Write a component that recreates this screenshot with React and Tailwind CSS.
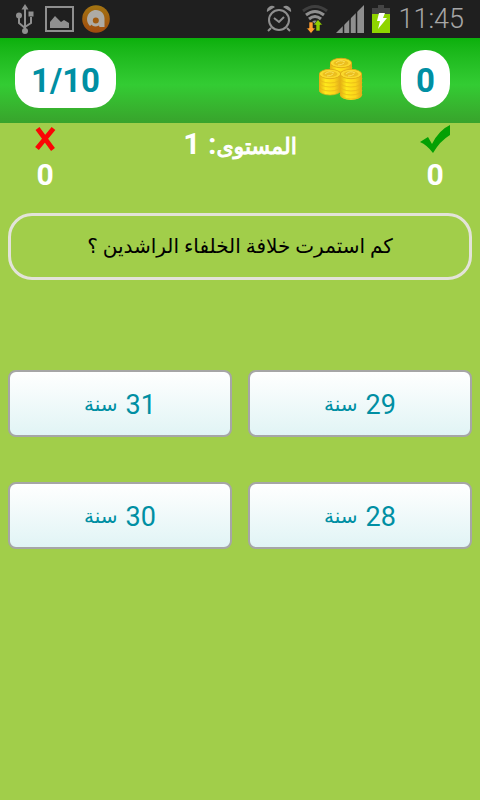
import React, { useState } from 'react';

const answers = [
  { id: 1, number: 29, unit: 'سنة' },
  { id: 2, number: 31, unit: 'سنة' },
  { id: 3, number: 28, unit: 'سنة' },
  { id: 4, number: 30, unit: 'سنة' },
];

const UsbIcon = () => (
  <svg width="20" height="32" viewBox="0 0 20 32" fill="none" stroke="#8f8f8f" strokeWidth="2">
    <path d="M10 5v23" />
    <path d="M10 25l-6-5v-6M10 24l6-4v-6" />
    <path d="M10 1l3.500 5.500h-7z" fill="#8f8f8f" stroke="none" />
    <circle cx="4" cy="12.500" r="3" fill="#8f8f8f" stroke="none" />
    <rect x="13.500" y="8.500" width="5" height="5" fill="#8f8f8f" stroke="none" />
    <circle cx="10" cy="28" r="3" fill="#8f8f8f" stroke="none" />
  </svg>
);

const GalleryIcon = () => (
  <svg width="29" height="26" viewBox="0 0 29 26">
    <rect x="1" y="1" width="27" height="24" fill="none" stroke="#8f8f8f" strokeWidth="2" />
    <path d="M5 22v-6l5-6 6 6 3-2 5 3v5z" fill="#8f8f8f" />
  </svg>
);

const AvastIcon = () => (
  <svg width="28" height="28" viewBox="0 0 28 28">
    <defs>
      <linearGradient id="orange" x1="0" y1="0" x2="0" y2="1">
        <stop offset="0" stopColor="#a37512" />
        <stop offset="1" stopColor="#a04a0e" />
      </linearGradient>
    </defs>
    <circle cx="14" cy="14" r="13.800" fill="url(#orange)" />
    <path
      d="M8 21C2 15 6 5 14 5c5 0 8.500 4 8.500 8.500V22h-5l-.5-1.500C11 24 6.500 18 9 14c2-4 9-3 9 1.500 0 2-1.500 3.500-3.500 3.500 2-1 2-5-.5-5-4 0-3.500 6-6 7z"
      fill="#aeaba5"
    />
    <circle cx="13.800" cy="15.500" r="3" fill="#a05b10" />
  </svg>
);

const AlarmIcon = () => (
  <svg width="26" height="28" viewBox="0 0 26 28" fill="none" stroke="#8f8f8f" strokeWidth="2">
    <circle cx="13" cy="15" r="10" />
    <path d="M8 13l5 4 5-5M5 23l-3 3M21 23l3 3" />
    <path d="M1 7a5 5 0 0 1 8-5zM25 7a5 5 0 0 0-8-5z" fill="#8f8f8f" stroke="none" />
  </svg>
);

const WifiIcon = () => (
  <svg width="26" height="30" viewBox="0 0 26 30" fill="none" strokeWidth="3">
    <path d="M1 7Q13-2 25 7" stroke="#3f3f3f" />
    <path d="M4 11Q13 4 22 11M7 15Q13 10 19 15" stroke="#8f8f8f" />
    <path d="M10 17.500Q13 15.500 16 17.500L13 20z" fill="#8f8f8f" />
    <path d="M7 18h4v6h2.500L9 29.500 4.500 24H7z" fill="#ff9d2e" stroke="#1f1f1f" strokeWidth="0.600" />
    <path d="M14 27h4v-6h2.500L16 15.500 11.500 21H14z" fill="#8fcc00" stroke="#1f1f1f" strokeWidth="0.600" />
  </svg>
);

const SignalIcon = () => (
  <svg width="28" height="28" viewBox="0 0 28 28">
    <path d="M0 28L28 0v28z" fill="#8f8f8f" />
    <path d="M7.500 18v10M14 12v16M20.500 5v23" stroke="#1f1f1f" strokeWidth="1.500" />
  </svg>
);

const BatteryIcon = () => (
  <svg width="18" height="28" viewBox="0 0 18 28">
    <path d="M6 0h6v3h6v7H0V3h6z" fill="#454545" />
    <path d="M0 9h18v19H0z" fill="#8fd400" />
    <path d="M7 8h6l-2 5h4L6 24l2-8H5z" fill="#fff" />
  </svg>
);

const CoinStack = ({ x, y, height }) => (
  <g transform={`translate(${x} ${y})`}>
    <path d={`M0 5v${height}a11 5 0 0 0 22 0V5z`} fill="url(#gold)" />
    {[4, 8, 12, 16, 20].filter((row) => row <= height).map((row) => (
      <path key={row} d={`M0 ${row + 5}a11 5 0 0 0 22 0`} fill="none" stroke="#e5b517" strokeWidth="0.700" />
    ))}
    <ellipse cx="11" cy="5" rx="10.700" ry="4.700" fill="#fbd92c" stroke="#dba514" strokeWidth="0.800" />
    <ellipse cx="11" cy="5" rx="7.500" ry="3" fill="#ecbf20" />
    <path d="M6 5q4-4 9-1M8 7q4 0 6-2" fill="none" stroke="#f9e05a" />
  </g>
);

const CoinsIcon = () => (
  <svg width="44" height="44" viewBox="0 0 44 44" aria-hidden="true">
    <defs>
      <linearGradient id="gold">
        <stop offset="0" stopColor="#e3ae12" />
        <stop offset="0.300" stopColor="#ffea1c" />
        <stop offset="0.700" stopColor="#fbd51a" />
        <stop offset="1" stopColor="#dfa61b" />
      </linearGradient>
    </defs>
    <CoinStack x={11} y={1} height={12} />
    <CoinStack x={0} y={12} height={16} />
    <CoinStack x={21} y={12} height={21} />
  </svg>
);

const WrongIcon = () => (
  <svg width="22" height="26" viewBox="0 0 22 26" aria-hidden="true">
    <path d="M3.500 2.500l15.500 21M19.500 2.500L3 22.500" stroke="#fb0505" strokeWidth="4.800" />
  </svg>
);

const RightIcon = () => (
  <svg width="30" height="28" viewBox="0 0 30 28" aria-hidden="true">
    <path d="M0 17l8-5 4 7Q19 5 30 0v10Q20 16 13 28 7 20 0 17z" fill="#04a004" />
  </svg>
);

const StatusBar = () => (
  <div className="flex h-[38px] items-center justify-between bg-[#1f1f1f] pl-[15px] pr-4">
    <div className="flex items-center gap-2">
      <UsbIcon />
      <div className="flex items-center gap-2 pl-0.5">
        <GalleryIcon />
        <AvastIcon />
      </div>
    </div>
    <div className="flex items-center gap-2">
      <AlarmIcon />
      <div className="flex items-center gap-2 pl-0.5">
        <WifiIcon />
        <SignalIcon />
        <BatteryIcon />
      </div>
      <span className="text-[27px] leading-8 font-light text-[#a6a6a6]">11:45</span>
    </div>
  </div>
);

export default function App() {
  const [selected, setSelected] = useState(null);

  return (
    <div className="min-h-screen bg-[#a1ce4a] font-[Roboto,'DejaVu_Sans',sans-serif]">
      <StatusBar />

      {/* Progress and coins */}
      <header className="flex items-center justify-between bg-linear-to-b from-[#0bb00b] via-[#33cc33] via-55% to-[#38a32c] pt-3 pr-[30px] pb-[15px] pl-[15px]">
        <div className="rounded-3xl bg-white px-4 pt-1 text-[33px] leading-[54px] font-bold text-[#008fa3]">
          1/10
        </div>
        <div className="flex items-center gap-[38px]">
          <CoinsIcon />
          <div className="rounded-3xl bg-white px-[15px] pt-1 text-[33px] leading-[54px] font-bold text-[#008fa3]">
            0
          </div>
        </div>
      </header>

      {/* Score */}
      <section className="flex items-start justify-between px-[30px] text-[30px] font-bold text-white">
        <div className="flex w-[30px] flex-col items-center">
          <div className="flex h-8 items-center">
            <WrongIcon />
          </div>
          <span className="leading-10">0</span>
        </div>
        <h1 dir="rtl" className="leading-[42px]">
          <span className="text-[22px] font-normal [-webkit-text-stroke:1px_white]">المستوى</span>: 1
        </h1>
        <div className="flex w-[30px] flex-col items-center">
          <div className="flex h-8 items-center">
            <RightIcon />
          </div>
          <span className="leading-10">0</span>
        </div>
      </section>

      <main className="px-2 pt-[18px]" dir="rtl">
        <p className="rounded-3xl border-3 border-[#e3e3d9] py-[17px] text-center text-xl leading-[27px] text-black">
          كم استمرت خلافة الخلفاء الراشدين ؟
        </p>

        {/* Answers */}
        <div className="grid grid-cols-2 gap-x-4 gap-y-[45px] pt-[90px]">
          {answers.map((answer) => (
            <button
              key={answer.id}
              type="button"
              aria-pressed={selected === answer.id}
              onClick={() => setSelected(answer.id)}
              className="flex h-[67px] items-center justify-center gap-2 rounded-lg border-2 border-[#a6a6a6] bg-linear-to-b from-white to-[#e1f4f5] text-[27px] text-[#008fa3]"
            >
              <span className="pt-1">{answer.number}</span>
              <span className="text-xl">{answer.unit}</span>
            </button>
          ))}
        </div>
      </main>
    </div>
  );
}
